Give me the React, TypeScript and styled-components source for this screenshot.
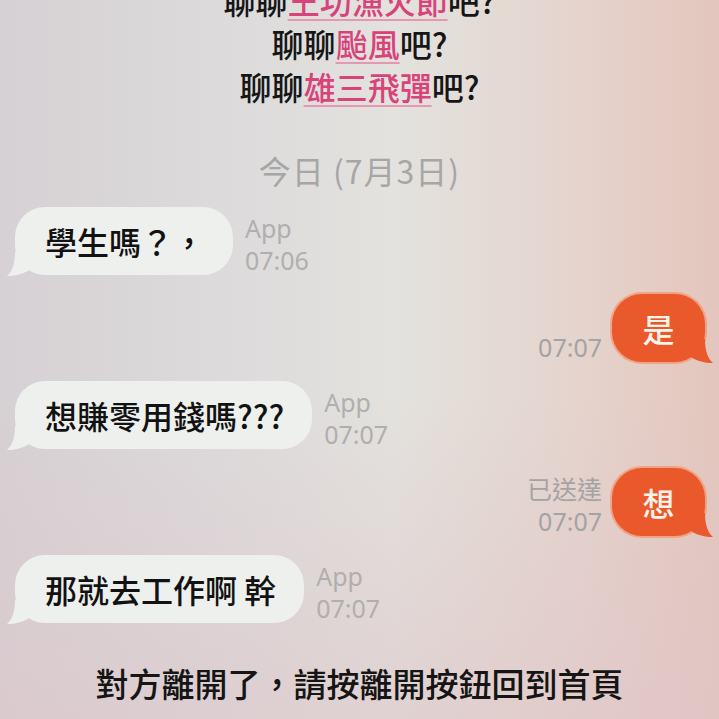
import styled, { createGlobalStyle } from 'styled-components';

const GlobalStyle = createGlobalStyle`
  html, body {
    margin: 0;
    padding: 0;
  }
  body {
    font-family: "Noto Sans CJK TC", "Noto Sans", sans-serif;
  }
`;

const Screen = styled.div`
  width: 719px;
  height: 719px;
  overflow: hidden;
  display: flex;
  flex-direction: column;
  background:
    linear-gradient(180deg, rgba(220, 200, 204, 0) 55%, rgba(222, 196, 200, 0.55) 100%),
    linear-gradient(90deg, #d6d1d4 0%, #dcdadb 30%, #e3e2de 55%, #e5d4cd 80%, #e3c6bd 100%);
`;

const Headline = styled.div`
  margin-top: -21px;
  display: flex;
  flex-direction: column;
  align-items: center;
  font-size: 32px;
  line-height: 43px;
  font-weight: 500;
  color: #161616;
`;

const Topic = styled.span`
  color: #d8437a;
  text-decoration: underline;
  text-decoration-color: #e597b3;
  text-decoration-thickness: 2px;
  text-underline-offset: 5px;
`;

const DateLabel = styled.div`
  margin-top: 44px;
  text-align: center;
  font-size: 32px;
  line-height: 36px;
  letter-spacing: 1px;
  color: #a6a6a6;
`;

const Thread = styled.div`
  margin-top: 19px;
  display: flex;
  flex-direction: column;
  row-gap: 19px;
`;

const Row = styled.div<{ $mine?: boolean }>`
  display: flex;
  align-items: flex-end;
  column-gap: ${(p) => (p.$mine ? '10px' : '12px')};
  justify-content: ${(p) => (p.$mine ? 'flex-end' : 'flex-start')};
  padding: ${(p) => (p.$mine ? '0 14px 0 0' : '0 0 0 15px')};
`;

const Bubble = styled.div<{ $mine?: boolean }>`
  position: relative;
  height: 68px;
  box-sizing: border-box;
  display: flex;
  align-items: center;
  justify-content: center;
  border-radius: 30px;
  font-size: 32px;
  font-weight: 500;
  white-space: nowrap;
  ${(p) =>
    p.$mine
      ? `
    width: 93px;
    background: #e9592b;
    color: #fff3ea;
    box-shadow: 0 0 0 2px rgba(246, 150, 112, 0.75);
  `
      : `
    padding: 0 28px 0 30px;
    background: #eef0ee;
    color: #121212;
  `}
`;

const TailSvg = styled.svg<{ $mine?: boolean }>`
  position: absolute;
  bottom: -1px;
  width: 24px;
  height: 24px;
  ${(p) => (p.$mine ? 'right: -8px; transform: scaleX(-1);' : 'left: -8px;')}
`;

const Meta = styled.div<{ $mine?: boolean }>`
  display: flex;
  flex-direction: column;
  align-items: ${(p) => (p.$mine ? 'flex-end' : 'flex-start')};
  margin-bottom: -1px;
  font-family: "Noto Sans", "Noto Sans CJK TC", sans-serif;
  font-size: 25px;
  line-height: 32px;
  color: ${(p) => (p.$mine ? '#a3a3a3' : '#b0afae')};
`;

const Footer = styled.div`
  margin-top: 40px;
  text-align: center;
  font-size: 33px;
  line-height: 40px;
  font-weight: 500;
  color: #151515;
`;

function Tail({ mine }: { mine?: boolean }) {
  return (
    <TailSvg $mine={mine} viewBox="0 0 24 24">
      <path
        d="M8 0 C8 12 5 20 0 24 C8 24 16 22 22 18 L22 0 Z"
        fill={mine ? '#e9592b' : '#eef0ee'}
      />
    </TailSvg>
  );
}

type Message = {
  mine?: boolean;
  text: string;
  meta: string[];
};

const messages: Message[] = [
  { text: '學生嗎？，', meta: ['App', '07:06'] },
  { mine: true, text: '是', meta: ['07:07'] },
  { text: '想賺零用錢嗎???', meta: ['App', '07:07'] },
  { mine: true, text: '想', meta: ['已送達', '07:07'] },
  { text: '那就去工作啊 幹', meta: ['App', '07:07'] },
];

export default function App() {
  return (
    <>
      <GlobalStyle />
      <Screen>
        <Headline>
          <div>
            聊聊<Topic>王功漁火節</Topic>吧?
          </div>
          <div>
            聊聊<Topic>颱風</Topic>吧?
          </div>
          <div>
            聊聊<Topic>雄三飛彈</Topic>吧?
          </div>
        </Headline>
        <DateLabel>今日 (7月3日)</DateLabel>
        <Thread>
          {messages.map((m, i) => {
            const metaBlock = (
              <Meta $mine={m.mine}>
                {m.meta.map((line) => (
                  <span key={line}>{line}</span>
                ))}
              </Meta>
            );
            return (
              <Row key={i} $mine={m.mine}>
                {m.mine && metaBlock}
                <Bubble $mine={m.mine}>
                  <Tail mine={m.mine} />
                  {m.text}
                </Bubble>
                {!m.mine && metaBlock}
              </Row>
            );
          })}
        </Thread>
        <Footer>對方離開了，請按離開按鈕回到首頁</Footer>
      </Screen>
    </>
  );
}
